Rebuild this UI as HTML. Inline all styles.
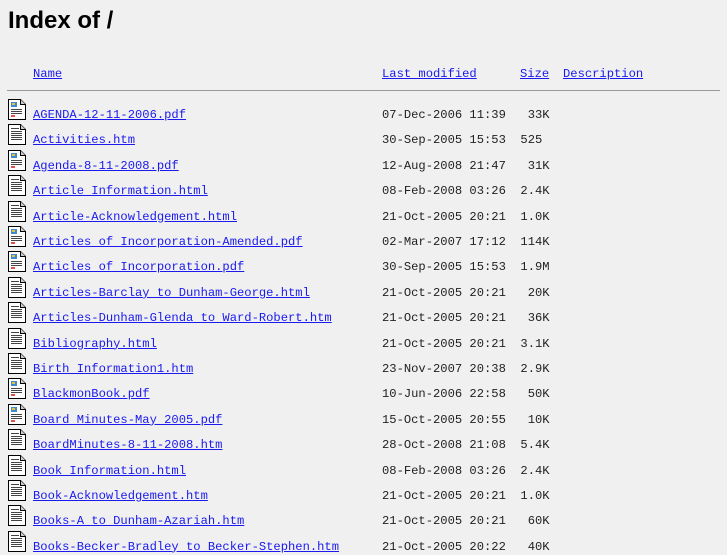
<!DOCTYPE html>
<html><head><meta charset="utf-8"><style>
body{margin:0;background:#f0f0f0;width:727px;height:545px;overflow:hidden;position:relative;font-family:"Liberation Mono",monospace;font-size:12.15px;color:#222}
h1{position:absolute;left:8px;top:7px;margin:0;font:bold 24px "Liberation Sans",sans-serif;color:#000}
a{color:#1a1aee;text-decoration:underline}
.r{position:absolute;left:0;height:25px;width:727px}
.r svg{position:absolute;left:7px;top:0}
.n{position:absolute;left:33px;top:10px;white-space:pre}
.d{position:absolute;left:382px;top:10px;white-space:pre}
.hr{position:absolute;left:7px;top:90px;width:713px;height:1px;background:#9a9a9a}
</style></head><body>
<h1>Index of /</h1>
<div style="position:absolute;top:67px;left:33px"><a href="#">Name</a></div>
<div style="position:absolute;top:67px;left:382px"><a href="#">Last modified</a></div>
<div style="position:absolute;top:67px;left:520px"><a href="#">Size</a></div>
<div style="position:absolute;top:67px;left:563px"><a href="#">Description</a></div>
<div class="hr"></div>
<div id="rows"></div>
<script>
var d=[["AGENDA-12-11-2006.pdf","07-Dec-2006 11:39"," 33K",1],
["Activities.htm","30-Sep-2005 15:53","525"],
["Agenda-8-11-2008.pdf","12-Aug-2008 21:47"," 31K",1],
["Article Information.html","08-Feb-2008 03:26","2.4K"],
["Article-Acknowledgement.html","21-Oct-2005 20:21","1.0K"],
["Articles of Incorporation-Amended.pdf","02-Mar-2007 17:12","114K",1],
["Articles of Incorporation.pdf","30-Sep-2005 15:53","1.9M",1],
["Articles-Barclay to Dunham-George.html","21-Oct-2005 20:21"," 20K"],
["Articles-Dunham-Glenda to Ward-Robert.htm","21-Oct-2005 20:21"," 36K"],
["Bibliography.html","21-Oct-2005 20:21","3.1K"],
["Birth Information1.htm","23-Nov-2007 20:38","2.9K"],
["BlackmonBook.pdf","10-Jun-2006 22:58"," 50K",1],
["Board Minutes-May 2005.pdf","15-Oct-2005 20:55"," 10K",1],
["BoardMinutes-8-11-2008.htm","28-Oct-2008 21:08","5.4K"],
["Book Information.html","08-Feb-2008 03:26","2.4K"],
["Book-Acknowledgement.htm","21-Oct-2005 20:21","1.0K"],
["Books-A to Dunham-Azariah.htm","21-Oct-2005 20:21"," 60K"],
["Books-Becker-Bradley to Becker-Stephen.htm","21-Oct-2005 20:22"," 40K"]];
var h="";
d.forEach(function(r,i){var t=98+i*25.4;
var ic=r[3]?'<rect x="4" y="4" width="6" height="5" fill="#3a8bd0"/><rect x="5" y="5" width="3" height="2" fill="#e8c040"/><path d="M4 11.5h11M4 13.5h11M4 15.5h11" stroke="#444"/><rect x="4" y="17" width="4" height="2" fill="#e05050"/>':'<path d="M4 5.5h8M4 8.5h11M4 10.5h11M4 12.5h11M4 14.5h11M4 16.5h11" stroke="#444"/>';
h+='<div class="r" style="top:'+t+'px"><svg width="20" height="23" viewBox="0 0 20 23"><path d="M1.5 1.5h12l5 5v15h-17z" fill="#fff" stroke="#000"/><path d="M13.5 1.5v5h5" fill="#ccc" stroke="#000"/>'+ic+'</svg><a class="n" href="#">'+r[0]+'</a><span class="d">'+r[1]+'  '+r[2]+'</span></div>';});
document.getElementById("rows").innerHTML=h;
</script>
</body></html>
